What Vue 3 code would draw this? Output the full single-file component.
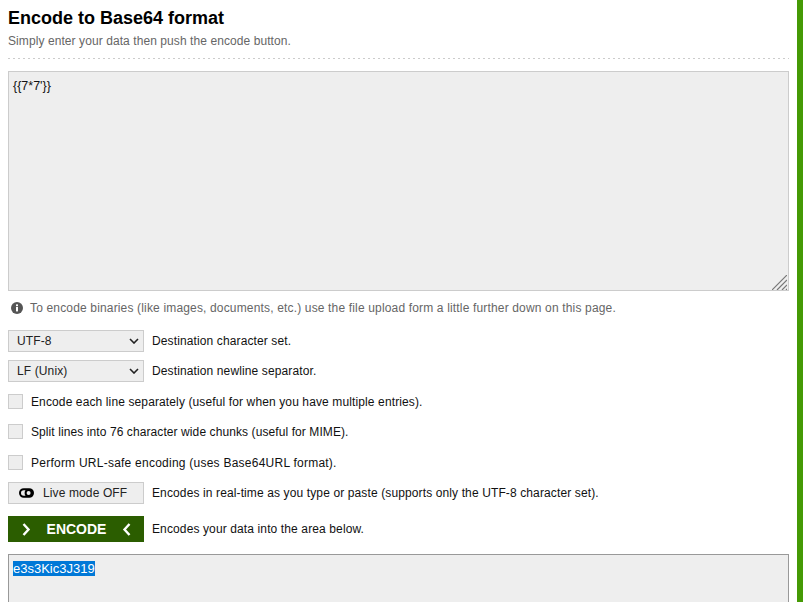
<template>
  <div class="page">
    <main class="content">
      <h1 class="title">Encode to Base64 format</h1>
      <p class="subtitle">Simply enter your data then push the encode button.</p>
      <div class="divider"></div>

      <div class="input-wrap">
        <textarea class="input-area" v-model="source" spellcheck="false"></textarea>
        <svg class="grip" viewBox="0 0 15 15" width="15" height="15">
          <path d="M0 15L15 0M5 15L15 5M10 15l5-5M14 15l1-1" fill="none" stroke="#777" stroke-width="1.2" />
        </svg>
      </div>

      <p class="hint">
        <svg class="hint-icon" viewBox="0 0 12 12" width="12" height="12">
          <circle cx="6" cy="6" r="6" fill="#555" />
          <rect x="5" y="5" width="2" height="4.4" fill="#fff" />
          <rect x="5" y="2.4" width="2" height="1.8" fill="#fff" />
        </svg>
        To encode binaries (like images, documents, etc.) use the file upload form a little further down on this page.
      </p>

      <div class="row select-row" v-for="item in selects" :key="item.label">
        <div class="select-box">
          <span>{{ item.value }}</span>
          <svg viewBox="0 0 10 6" width="10" height="6">
            <path d="M1 1l4 4 4-4" fill="none" stroke="#222" stroke-width="1.6" />
          </svg>
        </div>
        <span>{{ item.label }}</span>
      </div>

      <div class="options">
        <label class="option" v-for="opt in options" :key="opt">
          <span class="check"></span>
          <span>{{ opt }}</span>
        </label>
      </div>

      <div class="row">
        <button class="live-btn" type="button">
          <svg viewBox="0 0 15 10" width="15" height="10">
            <rect x="1" y="1.2" width="13" height="7.6" rx="3.8" fill="none" stroke="#000" stroke-width="2" />
            <circle cx="9.6" cy="5" r="3" fill="none" stroke="#000" stroke-width="2" />
          </svg>
          Live mode OFF
        </button>
        <span>Encodes in real-time as you type or paste (supports only the UTF-8 character set).</span>
      </div>

      <div class="row encode-row">
        <button class="encode-btn" type="button">
          <svg viewBox="0 0 9 13" width="9" height="13">
            <path d="M1.5 1l5 5.500-5 5.500" fill="none" stroke="#fff" stroke-width="2.4" />
          </svg>
          <span>ENCODE</span>
          <svg viewBox="0 0 9 13" width="9" height="13">
            <path d="M7.500 1l-5 5.500 5 5.500" fill="none" stroke="#fff" stroke-width="2.4" />
          </svg>
        </button>
        <span>Encodes your data into the area below.</span>
      </div>

      <div class="output-area"><span class="selected">e3s3Kic3J319</span></div>
    </main>
    <div class="side-bar"></div>
  </div>
</template>

<script setup>
import { ref } from "vue";

const source = ref("{{7*7'}}");

const selects = [
  { value: "UTF-8", label: "Destination character set." },
  { value: "LF (Unix)", label: "Destination newline separator." },
];

const options = [
  "Encode each line separately (useful for when you have multiple entries).",
  "Split lines into 76 character wide chunks (useful for MIME).",
  "Perform URL-safe encoding (uses Base64URL format).",
];
</script>

<style>
html,
body {
  margin: 0;
  overflow: hidden;
}
</style>

<style scoped>
.page {
  display: flex;
  height: 602px;
  overflow: hidden;
  background: #fff;
  font-family: "Liberation Sans", Arial, sans-serif;
  font-size: 12px;
  letter-spacing: 0.12px;
  color: #111;
}

.content {
  width: 781px;
  margin-left: 8px;
  flex: none;
}

.side-bar {
  width: 6px;
  height: 100%;
  margin-left: 8px;
  background: #459a05;
}

.title {
  margin: 8px 0 0;
  font-size: 18px;
  line-height: 21px;
  font-weight: bold;
  letter-spacing: 0;
  color: #000;
}

.subtitle {
  margin: 5px 0 0;
  line-height: 14px;
  letter-spacing: 0.08px;
  color: #666;
}

.divider {
  height: 1px;
  margin: 10px 0 12px;
  background: repeating-linear-gradient(to right, #ccc 0 2px, transparent 2px 5px);
}

.input-wrap {
  position: relative;
  height: 220px;
}

.input-area {
  display: block;
  box-sizing: border-box;
  width: 781px;
  height: 220px;
  padding: 6px 4px;
  margin: 0;
  border: 1px solid #ccc;
  background: #eee;
  font: 12.5px/16px "Liberation Sans", Arial, sans-serif;
  color: #111;
  outline: none;
  resize: none;
}

.grip {
  position: absolute;
  right: 2px;
  bottom: 1px;
}

.hint {
  display: flex;
  align-items: center;
  gap: 7px;
  margin: 10px 0 0 3px;
  line-height: 14px;
  letter-spacing: 0.16px;
  color: #666;
}

.row {
  display: flex;
  align-items: center;
  gap: 8px;
}

.select-row {
  margin-top: 8px;
}

.hint + .select-row {
  margin-top: 15px;
}

.select-box {
  display: flex;
  align-items: center;
  justify-content: space-between;
  box-sizing: border-box;
  width: 136px;
  height: 22px;
  padding: 0 4px 0 8px;
  border: 1px solid #ccc;
  background: #eee;
  color: #222;
}

.options {
  margin-top: 12px;
}

.option {
  display: flex;
  align-items: center;
  gap: 8px;
  height: 15px;
  margin-bottom: 15px;
}

.option:nth-child(2) {
  margin-bottom: 16px;
  letter-spacing: 0.09px;
}

.option:last-child {
  margin-bottom: 12px;
  letter-spacing: 0.24px;
}

.check {
  box-sizing: border-box;
  width: 15px;
  height: 15px;
  border: 1px solid #ccc;
  background: #eee;
}

.live-btn {
  display: flex;
  align-items: center;
  gap: 9px;
  box-sizing: border-box;
  width: 136px;
  height: 22px;
  padding: 0 0 0 10px;
  border: 1px solid #ccc;
  background: #eee;
  font: 12px "Liberation Sans", Arial, sans-serif;
  letter-spacing: 0.12px;
  color: #222;
}

.encode-row {
  margin-top: 12px;
}

.encode-btn {
  display: flex;
  align-items: center;
  justify-content: space-between;
  box-sizing: border-box;
  width: 136px;
  height: 26px;
  padding: 0 13px 0 14px;
  border: 0;
  background: #2b5d00;
  font: bold 14px "Liberation Sans", Arial, sans-serif;
  letter-spacing: 0;
  color: #fff;
}

.output-area {
  box-sizing: border-box;
  width: 781px;
  height: 220px;
  margin-top: 12px;
  padding: 6px 4px;
  border: 1px solid #999;
  background: #eee;
  font-size: 13px;
  letter-spacing: 0;
  line-height: 16px;
}

.selected {
  background: #0078d7;
  color: #fff;
}
</style>
